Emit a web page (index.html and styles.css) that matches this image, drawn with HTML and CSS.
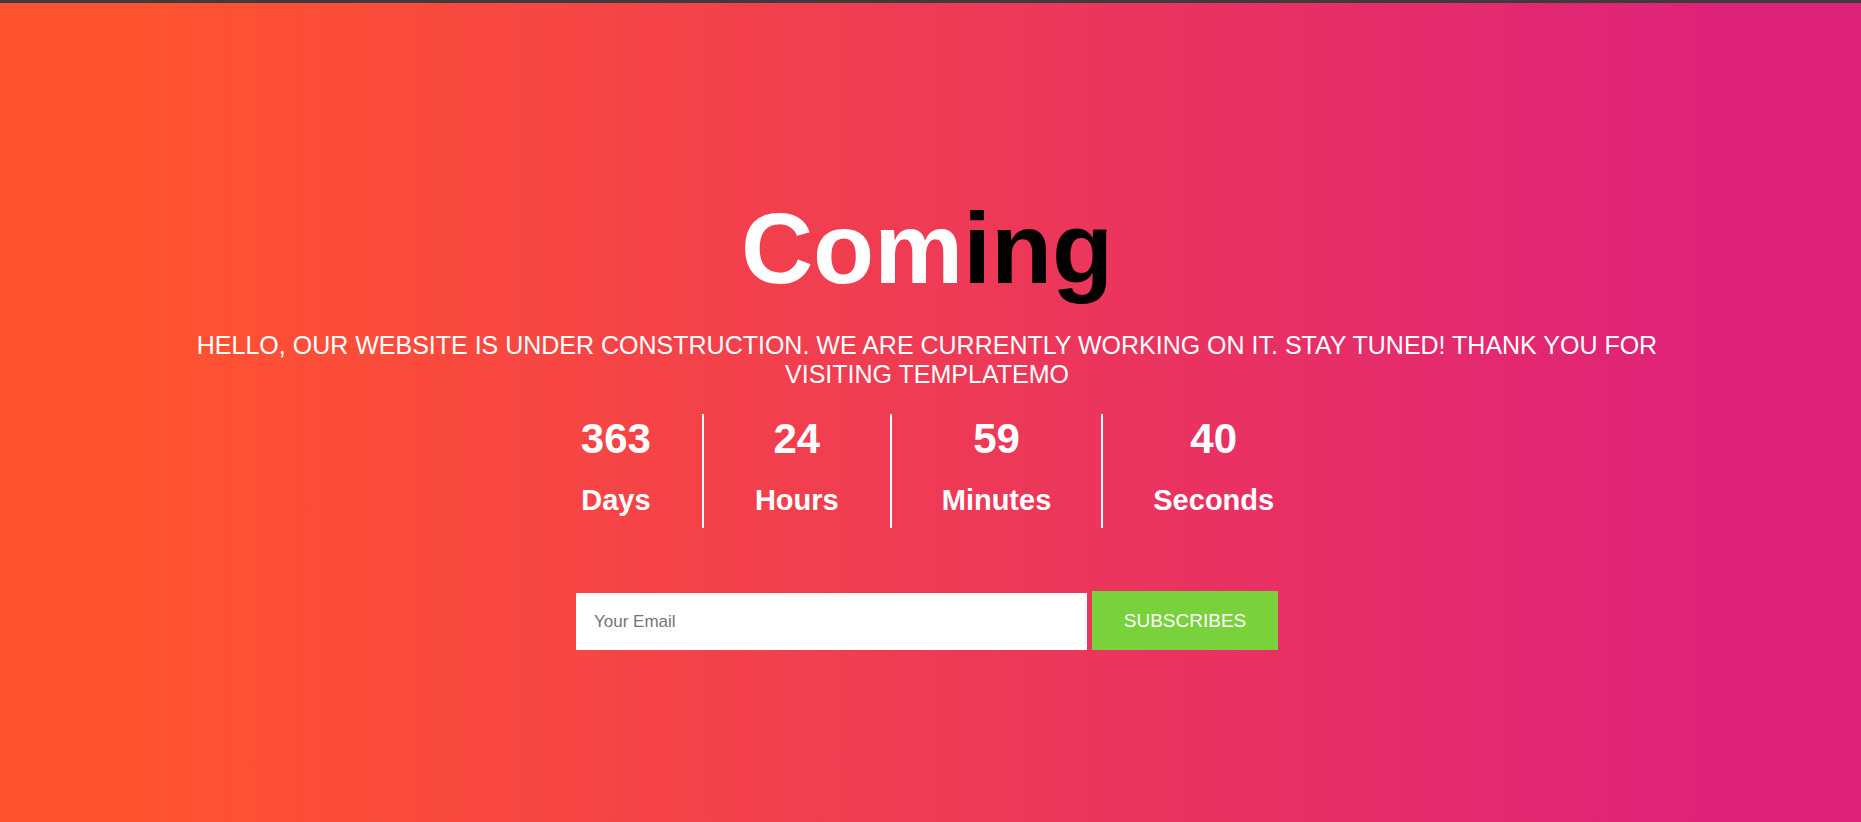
FILE: index.html
```html
<!DOCTYPE html>
<html lang="en">
<head>
<meta charset="utf-8">
<title>Coming Soon</title>
<link rel="stylesheet" href="styles.css">
</head>
<body>
<div class="topbar"></div>
<section class="hero">
  <h1 class="title"><span class="white">Com</span><span class="dark">ing</span></h1>
  <p class="subtitle">Hello, our website is under construction. We are currently working on it. Stay tuned! Thank you for visiting templatemo</p>
  <div class="countdown">
    <div class="unit"><div class="num">363</div><div class="label">Days</div></div>
    <div class="unit"><div class="num">24</div><div class="label">Hours</div></div>
    <div class="unit narrow"><div class="num">59</div><div class="label">Minutes</div></div>
    <div class="unit last"><div class="num">40</div><div class="label">Seconds</div></div>
  </div>
  <form class="subscribe">
    <input class="email" type="email" placeholder="Your Email">
    <button class="btn" type="button">SUBSCRIBES</button>
  </form>
</section>
</body>
</html>
```
FILE: styles.css
```css
html, body {
  margin: 0;
  padding: 0;
}
body {
  font-family: "Liberation Sans", Arial, sans-serif;
  overflow: hidden;
}
.topbar {
  height: 3px;
  background: #3c3c3c;
}
.hero {
  height: 819px;
  box-sizing: border-box;
  padding: 195px 7px 0 0;
  background: linear-gradient(to right, #ff5330 8%, #df2279 92%);
  display: flex;
  flex-direction: column;
  align-items: center;
  color: #fff;
}
.title {
  margin: 0;
  font-size: 100px;
  line-height: 100px;
  font-weight: bold;
}
.white { color: #fff; }
.dark { color: #000; }
.subtitle {
  margin: 33px 0 0;
  max-width: 1560px;
  text-align: center;
  text-transform: uppercase;
  font-size: 25px;
  line-height: 29px;
}
.countdown {
  margin: 25px 0 0;
  display: flex;
}
.unit {
  padding: 0 51px 8px;
  border-right: 2px solid #fff;
  text-align: center;
  font-weight: bold;
}
.unit.narrow {
  padding-left: 50px;
  padding-right: 50px;
}
.unit.last {
  padding-left: 50px;
  padding-right: 50px;
  border-right: none;
}
.num {
  font-size: 42px;
  line-height: 50px;
}
.label {
  margin-top: 17px;
  font-size: 29px;
  line-height: 39px;
}
.subscribe {
  margin-top: 63px;
  display: flex;
  align-items: flex-end;
  gap: 5px;
}
.email {
  width: 511px;
  height: 57px;
  box-sizing: border-box;
  border: none;
  outline: none;
  padding: 0 18px;
  font-family: "Liberation Sans", Arial, sans-serif;
  font-size: 17px;
  background: #fff;
}
.email::placeholder {
  color: #757575;
}
.btn {
  width: 186px;
  height: 59px;
  border: none;
  background: #79d13b;
  color: #fff;
  font-family: "Liberation Sans", Arial, sans-serif;
  font-size: 19px;
  padding: 0;
}
```
